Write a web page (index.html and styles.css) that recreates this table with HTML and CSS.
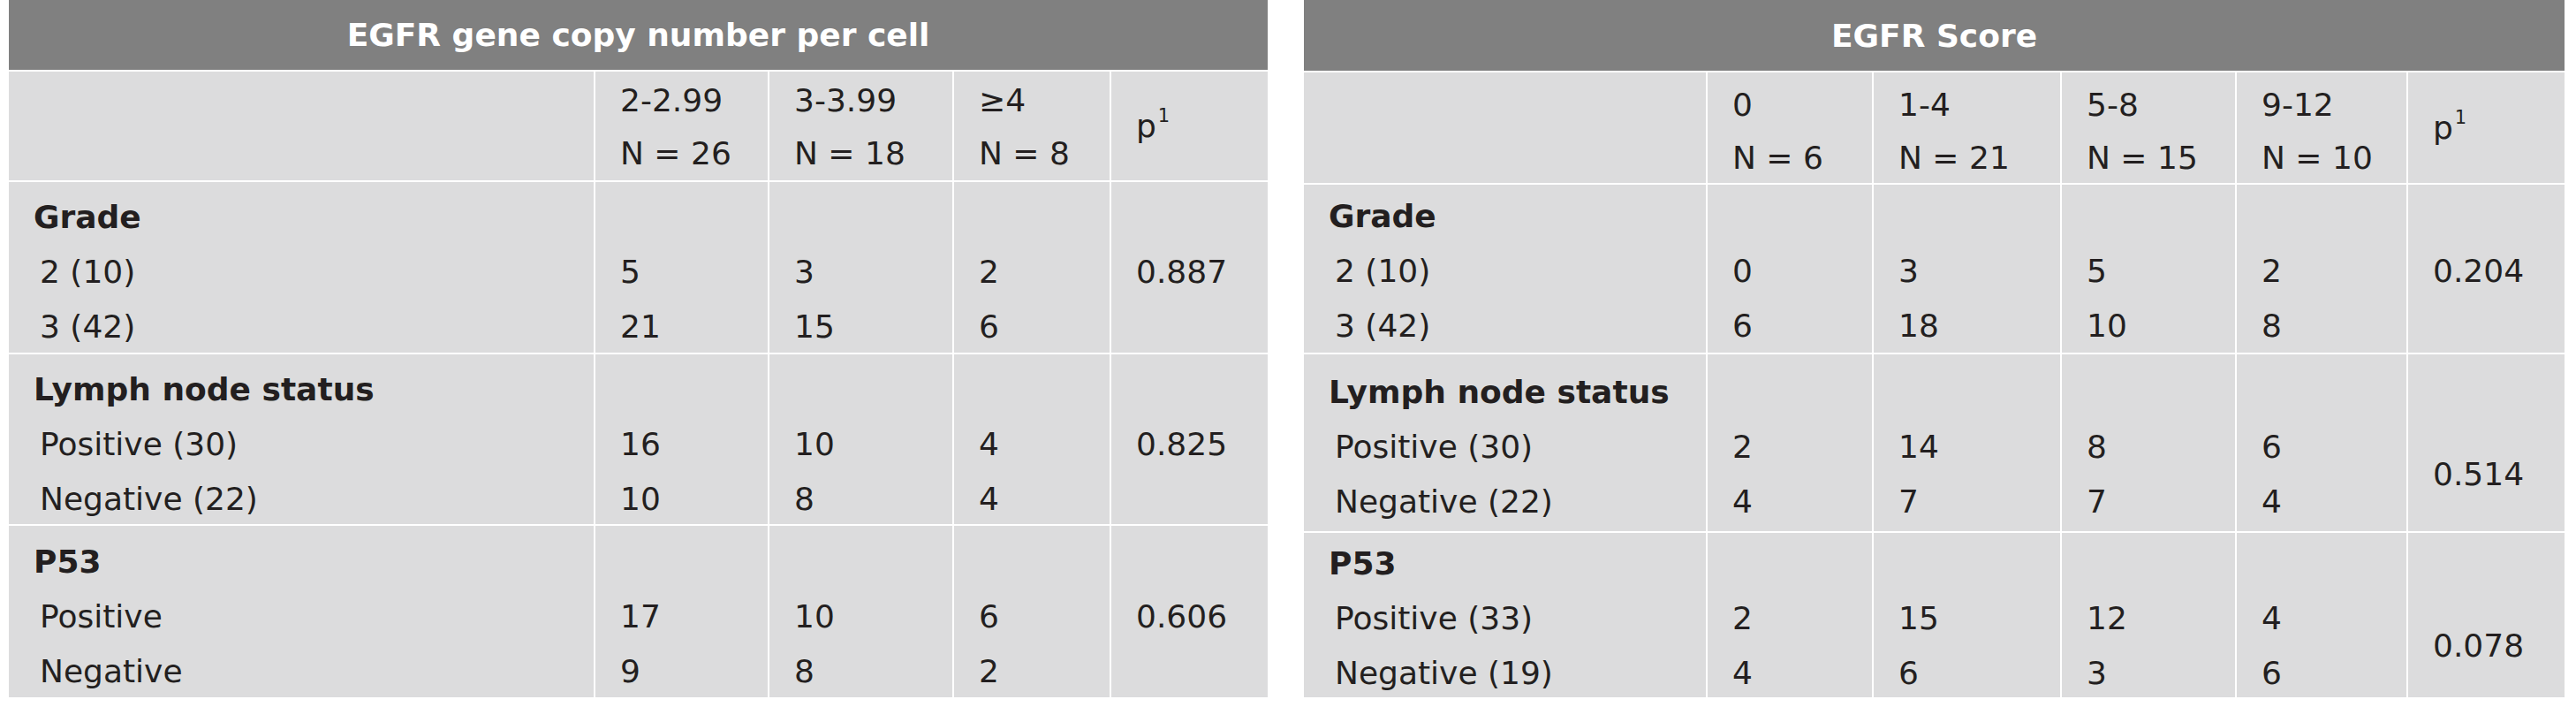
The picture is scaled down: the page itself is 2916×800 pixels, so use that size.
FILE: index.html
```html
<!DOCTYPE html>
<html lang="en">
<head>
<meta charset="utf-8">
<title>EGFR tables</title>
<link rel="stylesheet" href="styles.css">
</head>
<body>
<div class="page">
  <section class="tbl tbl-copy">
    <div class="title">EGFR gene copy number per cell</div>
    <div class="cell head"></div>
    <div class="cell head"><div>2-2.99</div><div>N = 26</div></div>
    <div class="cell head"><div>3-3.99</div><div>N = 18</div></div>
    <div class="cell head"><div>≥4</div><div>N = 8</div></div>
    <div class="cell head pcol"><span>p<sup>1</sup></span></div>

    <div class="cell s1"><div class="grp">Grade</div><div class="sub">2 (10)</div><div class="sub">3 (42)</div></div>
    <div class="cell s1 vals"><div>5</div><div>21</div></div>
    <div class="cell s1 vals"><div>3</div><div>15</div></div>
    <div class="cell s1 vals"><div>2</div><div>6</div></div>
    <div class="cell s1 vals"><div>0.887</div></div>

    <div class="cell s2"><div class="grp">Lymph node status</div><div class="sub">Positive (30)</div><div class="sub">Negative (22)</div></div>
    <div class="cell s2 vals"><div>16</div><div>10</div></div>
    <div class="cell s2 vals"><div>10</div><div>8</div></div>
    <div class="cell s2 vals"><div>4</div><div>4</div></div>
    <div class="cell s2 vals"><div>0.825</div></div>

    <div class="cell s3"><div class="grp">P53</div><div class="sub">Positive</div><div class="sub">Negative</div></div>
    <div class="cell s3 vals"><div>17</div><div>9</div></div>
    <div class="cell s3 vals"><div>10</div><div>8</div></div>
    <div class="cell s3 vals"><div>6</div><div>2</div></div>
    <div class="cell s3 vals"><div>0.606</div></div>
  </section>

  <section class="tbl tbl-score">
    <div class="title">EGFR Score</div>
    <div class="cell head"></div>
    <div class="cell head"><div>0</div><div>N = 6</div></div>
    <div class="cell head"><div>1-4</div><div>N = 21</div></div>
    <div class="cell head"><div>5-8</div><div>N = 15</div></div>
    <div class="cell head"><div>9-12</div><div>N = 10</div></div>
    <div class="cell head pcol"><span>p<sup>1</sup></span></div>

    <div class="cell s1"><div class="grp">Grade</div><div class="sub">2 (10)</div><div class="sub">3 (42)</div></div>
    <div class="cell s1 vals"><div>0</div><div>6</div></div>
    <div class="cell s1 vals"><div>3</div><div>18</div></div>
    <div class="cell s1 vals"><div>5</div><div>10</div></div>
    <div class="cell s1 vals"><div>2</div><div>8</div></div>
    <div class="cell s1 vals"><div>0.204</div></div>

    <div class="cell s2"><div class="grp">Lymph node status</div><div class="sub">Positive (30)</div><div class="sub">Negative (22)</div></div>
    <div class="cell s2 vals"><div>2</div><div>4</div></div>
    <div class="cell s2 vals"><div>14</div><div>7</div></div>
    <div class="cell s2 vals"><div>8</div><div>7</div></div>
    <div class="cell s2 vals"><div>6</div><div>4</div></div>
    <div class="cell s2 vals"><div class="span2">0.514</div></div>

    <div class="cell s3"><div class="grp">P53</div><div class="sub">Positive (33)</div><div class="sub">Negative (19)</div></div>
    <div class="cell s3 vals"><div>2</div><div>4</div></div>
    <div class="cell s3 vals"><div>15</div><div>6</div></div>
    <div class="cell s3 vals"><div>12</div><div>3</div></div>
    <div class="cell s3 vals"><div>4</div><div>6</div></div>
    <div class="cell s3 vals"><div class="span2">0.078</div></div>
  </section>
</div>
</body>
</html>
```

FILE: styles.css
```css
* {
  box-sizing: border-box;
  margin: 0;
  padding: 0;
}

html, body {
  background: #ffffff;
}

body {
  font-family: "DejaVu Sans", Verdana, sans-serif;
  font-size: 36px;
  color: #231f20;
  width: 2916px;
  height: 800px;
  overflow: hidden;
}

.page {
  display: flex;
  gap: 41px;
  padding-left: 10px;
}

.tbl {
  display: grid;
  gap: 2px;
  background: #ffffff;
}

.tbl-copy {
  width: 1425px;
  grid-template-columns: 662px 195px 207px 176px 177px;
  grid-template-rows: 79px 123px 193px 192px 194px;
}

.tbl-score {
  width: 1427px;
  grid-template-columns: 455px 186px 211px 196px 192px 177px;
  grid-template-rows: 80px 125px 190px 200px 186px;
}

.title {
  grid-column: 1 / -1;
  background: #808080;
  color: #ffffff;
  font-weight: bold;
  display: flex;
  align-items: center;
  justify-content: center;
  white-space: nowrap;
}

.cell {
  background: #dcdcdd;
  padding-left: 28px;
  line-height: 62px;
  white-space: nowrap;
  overflow: hidden;
}

.head {
  line-height: 60px;
  padding-top: 3px;
}

.tbl-score .head {
  padding-top: 7px;
}

.head.pcol {
  display: flex;
  align-items: center;
  padding-top: 0;
  line-height: 40px;
}

sup {
  font-size: 21px;
  line-height: 0;
  vertical-align: 17px;
  margin-left: 2px;
}

.grp {
  font-weight: bold;
}

.sub {
  padding-left: 7px;
}

.vals::before {
  content: "";
  display: block;
  height: 62px;
}

.span2 {
  line-height: 124px;
}

.tbl-copy .s1 { padding-top: 9px; }
.tbl-copy .s2 { padding-top: 9px; }
.tbl-copy .s3 { padding-top: 10px; }

.tbl-score .s1 { padding-top: 5px; }
.tbl-score .s2 { padding-top: 12px; }
.tbl-score .s3 { padding-top: 4px; }
```
